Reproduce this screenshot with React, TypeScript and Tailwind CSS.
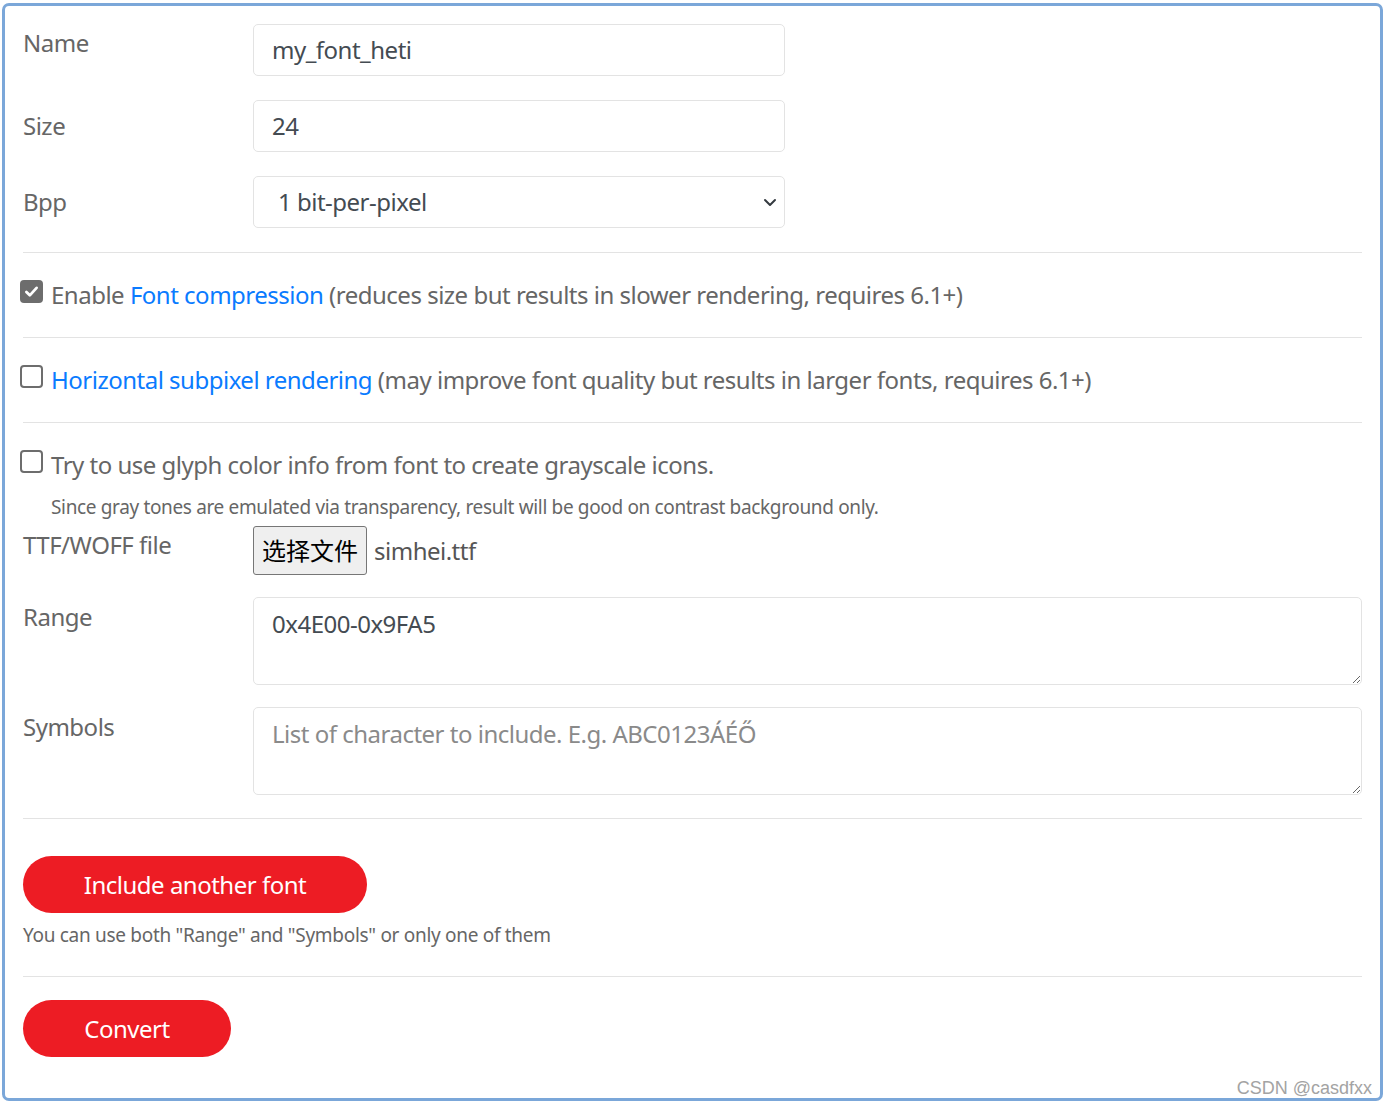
import React from 'react'

const FONT = { fontFamily: '"Noto Sans", "Noto Sans CJK SC", sans-serif' }

function Check({ on }: { on?: boolean }) {
  return on ? (
    <span className="-ml-[3px] -mt-[8px] flex h-[23px] w-[23px] shrink-0 items-center justify-center rounded-[4px] bg-[#6d6d6d]">
      <svg viewBox="0 0 16 16" className="h-[17px] w-[17px]" fill="none" stroke="white" strokeWidth="2.6" strokeLinecap="round" strokeLinejoin="round">
        <path d="M3.2 8.4l3.2 3.2 6.4-7" />
      </svg>
    </span>
  ) : (
    <span className="-ml-[3px] -mt-[8px] h-[23px] w-[23px] shrink-0 rounded-[4px] border-2 border-[#6d6d6d] bg-white" />
  )
}

const Hr = () => <div className="h-px bg-[#e3e3e3]" />

export default function App() {
  return (
    <div className="bg-white" style={FONT}>
      <div className="relative ml-[2px] mt-[3px] h-[1098px] w-[1381px] rounded-[7px] border-[3px] border-[#7ba7d9] px-[18px] pt-[18px] text-[24px] leading-[36px] tracking-[-0.5px] text-[#666]">
        {/* name / size / bpp */}
        <div className="grid grid-cols-[230px_532px] gap-y-[24px]">
          <div className="pt-[1px]">Name</div>
          <div className="flex h-[52px] items-center rounded-[5px] border border-[#e3e3e3] px-[18px] text-[#444b52]">my_font_heti</div>
          <div className="pt-[8px]">Size</div>
          <div className="flex h-[52px] items-center rounded-[5px] border border-[#e3e3e3] px-[18px] text-[#444b52]">24</div>
          <div className="pt-[8px]">Bpp</div>
          <div className="flex h-[52px] items-center justify-between rounded-[5px] border border-[#e3e3e3] pl-[24px] pr-[6px] text-[#444b52]">
            <span>1 bit-per-pixel</span>
            <svg viewBox="0 0 16 16" className="h-[16px] w-[16px]" fill="none" stroke="#343a40" strokeWidth="2" strokeLinecap="round" strokeLinejoin="round">
              <path d="M3 6l5 5 5-5" />
            </svg>
          </div>
        </div>

        <div className="mt-[24px]"><Hr /></div>

        {/* options */}
        <div className="flex items-center gap-[8px] py-[24px]">
          <Check on />
          <span>
            Enable <span className="text-[#0a7bff]">Font compression</span> (reduces size but results in slower rendering, requires 6.1+)
          </span>
        </div>
        <Hr />
        <div className="flex items-center gap-[8px] py-[24px]">
          <Check />
          <span>
            <span className="text-[#0a7bff]">Horizontal subpixel rendering</span> (may improve font quality but results in larger fonts, requires 6.1+)
          </span>
        </div>
        <Hr />
        <div className="pt-[24px]">
          <div className="flex items-center gap-[8px]">
            <Check />
            <span>Try to use glyph color info from font to create grayscale icons.</span>
          </div>
          <div className="mt-[10px] pl-[28px] text-[19px] leading-[29px] tracking-[-0.35px]">
            Since gray tones are emulated via transparency, result will be good on contrast background only.
          </div>
        </div>

        {/* file + range + symbols */}
        <div className="mt-[4px] grid grid-cols-[230px_1fr] gap-y-[22px]">
          <div className="pt-[1px]">TTF/WOFF file</div>
          <div className="flex items-center gap-[7px]">
            <span className="flex h-[49px] w-[114px] items-center justify-center rounded-[3px] border border-[#767676] bg-[#efefef] tracking-normal text-black">选择文件</span>
            <span className="text-[#555]">simhei.ttf</span>
          </div>
          <div className="pt-[2px]">Range</div>
          <textarea
            readOnly
            defaultValue="0x4E00-0x9FA5"
            className="block h-[88px] w-full rounded-[5px] border border-[#e3e3e3] px-[18px] py-[8px] text-[24px] leading-[36px] tracking-[-0.5px] text-[#444b52] outline-none"
            style={FONT}
          />
          <div className="pt-[2px]">Symbols</div>
          <textarea
            readOnly
            placeholder="List of character to include. E.g. ABC0123ÁÉŐ"
            className="block h-[88px] w-full rounded-[5px] border border-[#e3e3e3] px-[18px] py-[8px] text-[24px] leading-[36px] tracking-[-0.5px] text-[#444b52] outline-none placeholder:text-[#8a8a8a]"
            style={FONT}
          />
        </div>

        <div className="mt-[23px]"><Hr /></div>

        <button className="mt-[37px] flex h-[57px] w-[344px] items-center justify-center rounded-full bg-[#ed1c24] text-white">
          Include another font
        </button>
        <div className="mt-[8px] text-[19px] leading-[29px] tracking-[-0.3px]">You can use both "Range" and "Symbols" or only one of them</div>

        <div className="mt-[26px]"><Hr /></div>

        <button className="mt-[23px] flex h-[57px] w-[208px] items-center justify-center rounded-full bg-[#ed1c24] text-white">
          Convert
        </button>

        <div
          className="absolute bottom-[-2px] right-[8px] text-[18px] leading-[24px] tracking-normal text-[#a3a3a3]"
          style={{ fontFamily: '"Liberation Sans", Arial, sans-serif' }}
        >
          CSDN @casdfxx
        </div>
      </div>
    </div>
  )
}
